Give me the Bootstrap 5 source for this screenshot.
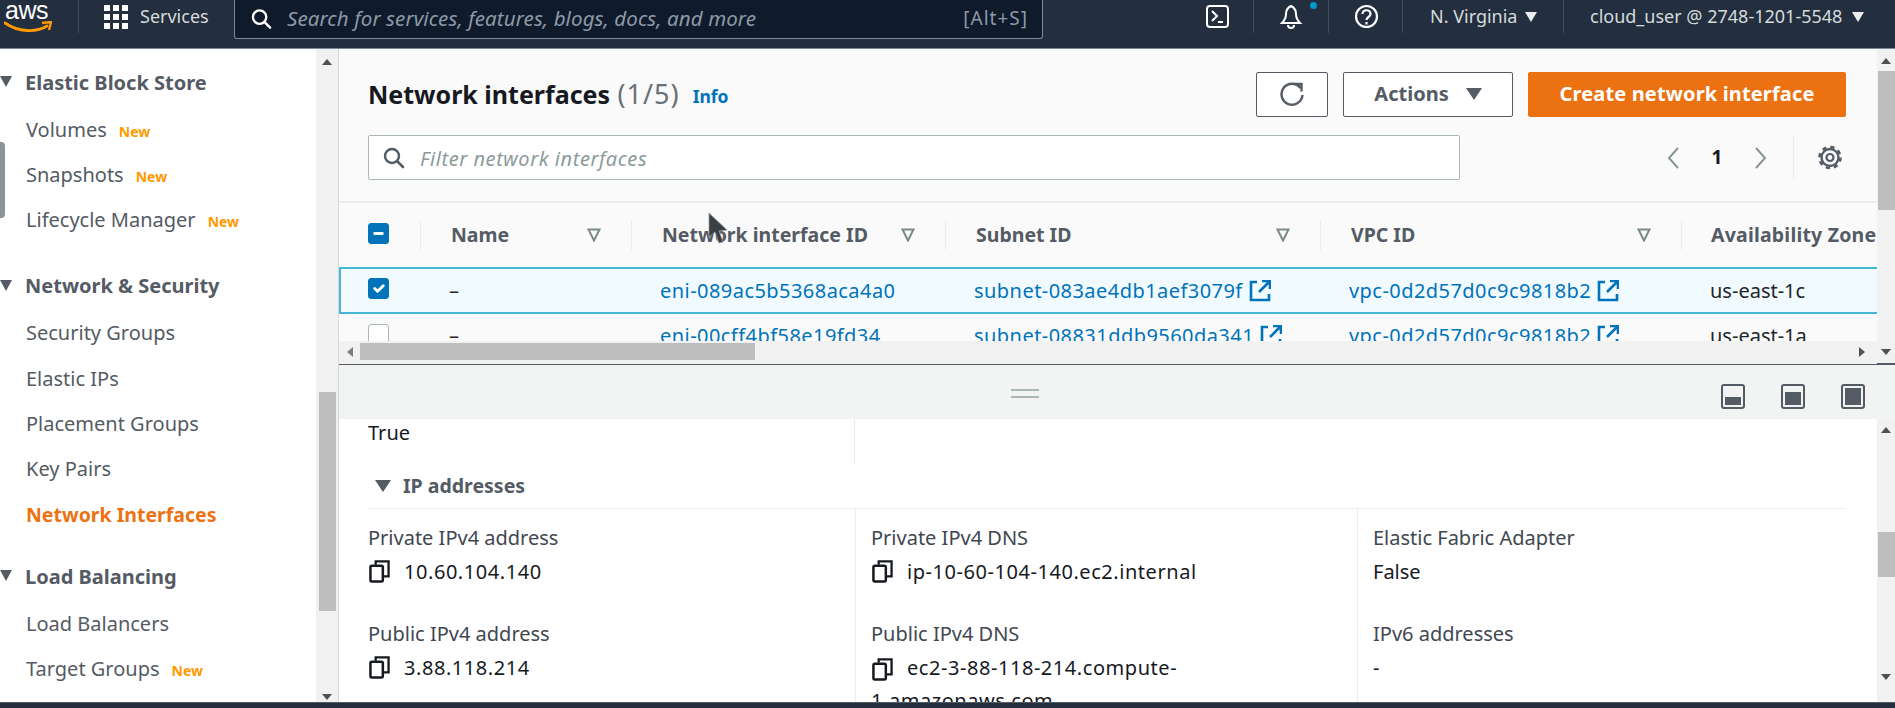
<!DOCTYPE html>
<html lang="en">
<head>
    <meta charset="UTF-8">
    <meta name="viewport" content="width=device-width, initial-scale=1.0">
    <title>Network interfaces | EC2 Management Console</title>
    <link href="https://cdn.jsdelivr.net/npm/bootstrap@5.3.0/dist/css/bootstrap.min.css" rel="stylesheet">
    <style>
        html, body { height: 100%; }
        body { font-family: "Noto Sans", "Open Sans", sans-serif; font-size: 20px; color: #16191f; background: #fff; overflow: hidden; }
        a { text-decoration: none; }
        .page-shell { height: 708px; }

        /* top bar */
        .topbar { height: 49px; flex: none; background: #232f3e; border-bottom: 1px solid #7d8998; color: #d5dbdb; font-size: 18px; }
        .hd-seg { height: 33px; flex: none; border-right: 1px solid #414d5c; }
        .hd-logo { width: 79px; padding-left: 4px; }
        .aws-word { display: block; color: #fff; font-family: "Liberation Sans", sans-serif; font-size: 25px; line-height: 21px; letter-spacing: -0.5px; padding-left: 1px; }
        .aws-smile { display: block; width: 48px; height: 12px; }
        .hd-services { width: 155px; border: 0; padding-left: 25px; gap: 12px; }
        .hd-search { width: 809px; height: 39px; flex: none; background: #0f1b2a; border: 1px solid #7d8998; border-top: 0; border-radius: 0 0 3px 3px; padding: 0 14px 1px 16px; gap: 15px; }
        .hd-search span.ph { color: #8d99a8; font-style: italic; font-size: 20.5px; letter-spacing: .1px; white-space: nowrap; }
        .hd-search span.kbd-hint { color: #8d99a8; font-size: 19px; letter-spacing: 1px; margin-left: auto; }
        .hd-term { width: 211px; padding-right: 24px; }
        .hd-bell { width: 75px; }
        .hd-help { width: 74px; padding-left: 2px; }
        .hd-region { width: 161px; padding-left: 27px; gap: 8px; }
        .hd-user { width: 331px; border: 0; padding-left: 26px; gap: 10px; white-space: nowrap; }
        .caret-w { width: 0; height: 0; border-left: 6px solid transparent; border-right: 6px solid transparent; border-top: 10px solid #eaeded; }
        .bell-dot { position: absolute; width: 7px; height: 7px; border-radius: 50%; background: #0099cc; top: 2px; right: 11px; }

        /* left navigation */
        .side-nav { width: 316px; flex: none; overflow: hidden; color: #545b64; padding-top: 20px; }
        .nav-head { height: 27px; font-weight: 700; padding-left: 25px; display: flex; align-items: center; position: relative; margin-top: 39.5px; margin-bottom: 20px; white-space: nowrap; }
        .nav-head:first-child { margin-top: 0; }
        .nav-head.tight { margin-top: 35.5px; }
        .tri-down { position: absolute; left: 0; top: 7px; width: 0; height: 0; border-left: 6px solid transparent; border-right: 6px solid transparent; border-top: 11px solid #545b64; }
        .nav-item-row { height: 27px; margin-bottom: 18.2px; padding-left: 26px; display: flex; align-items: center; gap: 12px; white-space: nowrap; }
        .nav-item-row.current { color: #ec7211; font-weight: 700; font-size: 19.5px; }
        .new-tag { color: #ff9900; font-weight: 700; font-size: 14px; padding-top: 3px; }
        .nav-handle { position: absolute; left: -4px; top: 93px; width: 9px; height: 76px; background: #8e9399; border-radius: 4px; }

        /* fake browser scrollbars */
        .sb-track { flex: none; background: #f1f1f1; display: flex; flex-direction: column; align-items: center; }
        .sb-left { width: 23px; border-right: 1px solid #d5dbdb; }
        .sb-thumb { background: #bdbdbd; flex: none; }
        .sb-up, .sb-down { flex: none; width: 0; height: 0; border-left: 5px solid transparent; border-right: 5px solid transparent; }
        .sb-up { border-bottom: 6px solid #505050; }
        .sb-down { border-top: 6px solid #505050; }
        .sb-right { width: 18px; }
        .side-up { margin-top: 10px; }
        .side-thumb { width: 17px; height: 219px; margin-top: 327px; }
        .side-down { margin-top: 83px; }
        .upper-up { margin-top: 9px; }
        .upper-thumb { width: 17px; height: 139px; margin-top: 7px; }
        .upper-down { margin-top: 139px; }
        .lower-up { margin-top: 8px; }
        .lower-thumb { width: 17px; height: 45px; margin-top: 99px; }
        .lower-down { margin-top: 97px; }

        /* upper panel */
        .work-area { min-width: 0; }
        .upper-panel { height: 316px; flex: none; background: #fafafa; border-bottom: 2px solid #545b64; }
        .upper-main { min-width: 0; }
        .tools-wrap { padding: 22px 31px 0 29px; height: 154px; flex: none; border-bottom: 2px solid #eaeded; }
        .page-title { font-size: 25px; font-weight: 700; margin: 0; line-height: 45px; white-space: nowrap; }
        .page-title span { font-weight: 400; font-size: 27px; color: #687078; letter-spacing: 1px; margin-left: 1px; }
        .info-link { color: #0073bb; font-weight: 700; font-size: 17.5px; margin-left: 13px; padding-top: 5px; }
        .aws-btn { height: 45px; border-radius: 2px; font-weight: 700; font-size: 20px; display: flex; align-items: center; justify-content: center; padding: 0; }
        .aws-btn.outline { background: #fff; border: 1px solid #545b64; color: #545b64; }
        .btn-refresh { width: 72px; margin-right: 15px; }
        .btn-actions { width: 170px; gap: 17px; margin-right: 15px; }
        .btn-create { width: 318px; background: #ec7211; color: #fff; border: 1px solid #ec7211; letter-spacing: .15px; }
        .tri-dark { width: 0; height: 0; border-left: 8px solid transparent; border-right: 8px solid transparent; border-top: 12px solid #545b64; }
        .filter-row { margin-top: 18px; }
        .filter-box { width: 1092px; height: 45px; background: #fff; border: 1px solid #aab7b8; border-radius: 2px; padding-left: 14px; gap: 15px; }
        .filter-box input { border: 0; background: none; outline: 0; flex: 1; font-size: 20px; font-style: italic; letter-spacing: .55px; padding: 2px 0 0; }
        .filter-box input::placeholder { color: #8c9a9b; }
        .pager-wrap { margin-left: auto; margin-right: 4px; }
        .pager-wrap b { width: 30px; text-align: center; font-size: 19px; margin: 0 22px; }
        .pager-sep { width: 1px; height: 45px; background: #eaeded; margin: 0 24px 0 25px; }

        .grid-clip { height: 138px; flex: none; overflow: hidden; }
        .eni-table { table-layout: fixed; width: 1538px; margin: 0; background: transparent; --bs-table-bg: transparent; }
        .eni-table th, .eni-table td { border: 0; padding: 0; vertical-align: middle; white-space: nowrap; overflow: hidden; }
        .eni-table thead th { height: 65px; color: #545b64; font-weight: 700; font-size: 19.5px; }
        .th-inner { height: 30px; display: flex; align-items: center; justify-content: space-between; border-left: 1px solid #eaeded; padding: 0 30px 0 30px; }
        .th-inner.az-head { letter-spacing: .2px; padding-left: 29px; padding-right: 0; }
        .eni-table tbody td { height: 45px; font-size: 20px; }
        .row-picked td { background: #f1faff; border-top: 2px solid #44b9d6 !important; border-bottom: 2px solid #44b9d6 !important; }
        .row-picked td:first-child { border-left: 2px solid #44b9d6 !important; }
        .cell-pad { padding-left: 29px !important; }
        .dash-cell { padding-left: 29px !important; }
        .eni-table a { color: #0073bb; letter-spacing: .45px; }
        .cb-cell { padding-left: 28px !important; }
        .row-picked .cb-cell { padding-left: 27px !important; }
        .form-check-input.aws-check { width: 21px; height: 21px; margin: 0 0 4px; border-radius: 3px; border: 1px solid #aab7b8; display: block; }
        .form-check-input.aws-check:checked, .form-check-input.aws-check:indeterminate { background-color: #0073bb; border-color: #0073bb; }
        .ext-ico { margin-left: 6px; vertical-align: -4px; }

        .hscroll { height: 23px; flex: none; background: #f1f1f1; padding: 0 12px 2px 8px; }
        .hs-left, .hs-right { width: 0; height: 0; border-top: 5px solid transparent; border-bottom: 5px solid transparent; flex: none; }
        .hs-left { border-right: 6px solid #7c7c7c; }
        .hs-right { border-left: 6px solid #505050; margin-left: auto; }
        .hs-thumb { width: 395px; height: 17px; background: #bdbdbd; margin-left: 7px; flex: none; }

        /* split handle */
        .drag-bar { height: 54px; flex: none; background: #f2f3f3; padding: 8px 30px 0 0; position: relative; }
        .grip { position: absolute; left: 672px; top: 24px; width: 28px; height: 9px; border-top: 2px solid #aab7b8; border-bottom: 2px solid #aab7b8; }
        .split-icons { gap: 36px; margin-left: auto; }

        /* lower panel */
        .lower-panel { min-height: 0; }
        .lower-main { min-width: 0; overflow: hidden; padding: 0 33px 0 29px; }
        .true-cell { width: 487px; height: 45px; flex: none; border-right: 1px solid #eaeded; line-height: 28px; }
        .section-head { height: 44px; flex: none; font-weight: 700; color: #545b64; font-size: 19.5px; gap: 12px; padding-left: 7px; border-bottom: 1px solid #eaeded; box-sizing: content-box; }
        .tri-sm { width: 0; height: 0; border-left: 8px solid transparent; border-right: 8px solid transparent; border-top: 12px solid #545b64; }
        .ip-grid { display: grid; grid-template-columns: 487px 502px 1fr; flex: 1; min-height: 0; overflow: hidden; }
        .ip-col { padding: 15px 0 0 15px; border-left: 1px solid #eaeded; }
        .ip-col:first-child { padding-left: 0; border-left: 0; }
        .ip-label { height: 27px; line-height: 27px; color: #414750; white-space: nowrap; }
        .ip-value { height: 33px; margin-top: 4px; margin-bottom: 32px; line-height: 33px; gap: 14px; white-space: nowrap; }
        .ip-value.num-val { letter-spacing: .55px; }
        .ip-value.wrap-val { display: block; white-space: normal; margin-bottom: 0; height: auto; }
        .ip-value svg { flex: none; margin-left: 1px; }
        .wrap-val svg { margin-right: 14px; vertical-align: text-bottom; }
        .footer-strip { height: 6px; flex: none; background: #232f3e; border-top: 1px solid #545b64; }

        .mouse-cursor { position: absolute; left: 708px; top: 212px; z-index: 5; }
    </style>
</head>
<body>
    <svg width="0" height="0" class="position-absolute">
        <symbol id="ico-search" viewBox="0 0 22 22"><circle cx="9" cy="9" r="7" fill="none" stroke="currentColor" stroke-width="2.4"/><path d="M14 14l6 6" stroke="currentColor" stroke-width="2.6" stroke-linecap="round"/></symbol>
        <symbol id="ico-ext" viewBox="0 0 22 22"><path d="M8 2H2v18h18v-6" fill="none" stroke="currentColor" stroke-width="2.6"/><path d="M13 1h8v8M20 2L10 12" fill="none" stroke="currentColor" stroke-width="2.6"/></symbol>
        <symbol id="ico-copy" viewBox="0 0 22 24"><path d="M7 5V1.5h13.500V17H15" fill="none" stroke="currentColor" stroke-width="2.400"/><rect x="1.500" y="6" width="13" height="16.500" rx="1.500" fill="none" stroke="currentColor" stroke-width="2.600"/></symbol>
        <symbol id="ico-sort" viewBox="0 0 14 14"><path d="M1.500 1.500h11L7 12.500z" fill="none" stroke="#7c8a8b" stroke-width="2"/></symbol>
    </svg>

    <svg class="mouse-cursor" width="22" height="33" viewBox="0 0 22 33"><path d="M1 1v24l6-5 4 11 4-1-4-11 8-1z" fill="#3a3f44" stroke="#9a9a9a" stroke-width=".8"/></svg>

    <div class="page-shell d-flex flex-column">
        <header class="topbar d-flex align-items-start">
            <div class="hd-seg hd-logo">
                <span class="aws-word">aws</span>
                <svg class="aws-smile" viewBox="0 0 48 12"><path d="M1 2c13 9 31 10 42 3" fill="none" stroke="#f90" stroke-width="2.800" stroke-linecap="round"/><path d="M38 2l9-1-2 8" fill="none" stroke="#f90" stroke-width="2.400"/></svg>
            </div>
            <div class="hd-seg hd-services d-flex align-items-center">
                <svg width="24" height="24" viewBox="0 0 24 24" fill="#fff"><rect width="6" height="6"/><rect x="9" width="6" height="6"/><rect x="18" width="6" height="6"/><rect y="9" width="6" height="6"/><rect x="9" y="9" width="6" height="6"/><rect x="18" y="9" width="6" height="6"/><rect y="18" width="6" height="6"/><rect x="9" y="18" width="6" height="6"/><rect x="18" y="18" width="6" height="6"/></svg>
                <span>Services</span>
            </div>
            <div class="hd-search d-flex align-items-center">
                <svg width="21" height="22" class="text-white flex-none"><use href="#ico-search"/></svg>
                <span class="ph">Search for services, features, blogs, docs, and more</span>
                <span class="kbd-hint">[Alt+S]</span>
            </div>
            <div class="hd-seg hd-term d-flex align-items-center justify-content-end">
                <svg width="23" height="23" viewBox="0 0 23 23" fill="none" stroke="#fff" stroke-width="2"><rect x="1" y="1" width="21" height="21" rx="3"/><path d="M6 6l5 5-5 5M12 17h5"/></svg>
            </div>
            <div class="hd-seg hd-bell d-flex align-items-center justify-content-center position-relative">
                <svg width="24" height="26" viewBox="0 0 24 26" fill="none" stroke="#fff" stroke-width="2"><path d="M12 2c-4 2-5 5-5 8 0 4-2 7-4 9h18c-2-2-4-5-4-9 0-3-1-6-5-8z"/><path d="M9 21c0 4 6 4 6 0" /></svg>
                <span class="bell-dot"></span>
            </div>
            <div class="hd-seg hd-help d-flex align-items-center justify-content-center">
                <svg width="25" height="25" viewBox="0 0 25 25" fill="none" stroke="#fff" stroke-width="2.200"><circle cx="12.500" cy="12.500" r="10.500"/><path d="M8.500 10c0-5 8-5 8 0 0 3-4 3-4 6"/><path d="M12.500 18v2.500"/></svg>
            </div>
            <div class="hd-seg hd-region d-flex align-items-center">
                <span>N. Virginia</span><span class="caret-w"></span>
            </div>
            <div class="hd-seg hd-user d-flex align-items-center">
                <span>cloud_user @ 2748-1201-5548</span><span class="caret-w"></span>
            </div>
        </header>

        <div class="d-flex flex-grow-1 position-relative" style="min-height:0">
            <aside class="side-nav">
                <div class="nav-head"><span class="tri-down"></span>Elastic Block Store</div>
                <div class="nav-item-row">Volumes <span class="new-tag">New</span></div>
                <div class="nav-item-row">Snapshots <span class="new-tag">New</span></div>
                <div class="nav-item-row">Lifecycle Manager <span class="new-tag">New</span></div>
                <div class="nav-head"><span class="tri-down"></span>Network &amp; Security</div>
                <div class="nav-item-row">Security Groups</div>
                <div class="nav-item-row">Elastic IPs</div>
                <div class="nav-item-row">Placement Groups</div>
                <div class="nav-item-row">Key Pairs</div>
                <div class="nav-item-row current">Network Interfaces</div>
                <div class="nav-head tight"><span class="tri-down"></span>Load Balancing</div>
                <div class="nav-item-row">Load Balancers</div>
                <div class="nav-item-row">Target Groups <span class="new-tag">New</span></div>
            </aside>
            <div class="sb-track sb-left">
                <span class="sb-up side-up"></span>
                <span class="sb-thumb side-thumb"></span>
                <span class="sb-down side-down"></span>
            </div>

            <div class="work-area d-flex flex-column flex-grow-1">
                <section class="upper-panel d-flex">
                    <div class="upper-main d-flex flex-column flex-grow-1">
                        <div class="tools-wrap">
                            <div class="d-flex align-items-center">
                                <h1 class="page-title">Network interfaces <span>(1/5)</span></h1>
                                <a href="#" class="info-link">Info</a>
                                <div class="d-flex ms-auto">
                                    <button type="button" class="aws-btn outline btn-refresh" aria-label="Refresh">
                                        <svg width="25" height="25" viewBox="0 0 25 25" fill="none" stroke="#545b64" stroke-width="2.400"><path d="M20.500 6A10.500 10.500 0 1 0 22.500 13"/><path d="M14 2h7.500v7.500"/></svg>
                                    </button>
                                    <button type="button" class="aws-btn outline btn-actions">Actions <span class="tri-dark"></span></button>
                                    <button type="button" class="aws-btn btn-create">Create network interface</button>
                                </div>
                            </div>
                            <div class="d-flex align-items-center filter-row">
                                <div class="filter-box d-flex align-items-center">
                                    <svg width="22" height="22" style="color:#545b64"><use href="#ico-search"/></svg>
                                    <input type="text" placeholder="Filter network interfaces">
                                </div>
                                <div class="pager-wrap d-flex align-items-center">
                                    <svg width="14" height="24" viewBox="0 0 14 24" fill="none" stroke="#879596" stroke-width="2"><path d="M12 2L3 12l9 10"/></svg>
                                    <b>1</b>
                                    <svg width="14" height="24" viewBox="0 0 14 24" fill="none" stroke="#879596" stroke-width="2"><path d="M2 2l9 10-9 10"/></svg>
                                    <span class="pager-sep"></span>
                                    <svg width="24" height="25" viewBox="0 0 24 25" fill="none" stroke="#545b64"><circle cx="12" cy="12.500" r="8.500" stroke-width="2.400"/><circle cx="12" cy="12.500" r="10.500" stroke-width="2.600" stroke-dasharray="4.200 4.050"/><circle cx="12" cy="12.500" r="3.500" stroke-width="2.200"/></svg>
                                </div>
                            </div>
                        </div>

                        <div class="grid-clip">
                            <table class="table eni-table">
                                <colgroup>
                                    <col style="width:80px"><col style="width:211px"><col style="width:314px"><col style="width:375px"><col style="width:361px"><col style="width:197px">
                                </colgroup>
                                <thead>
                                    <tr>
                                        <th class="cb-cell"><input class="form-check-input aws-check" type="checkbox" id="checkAll" aria-label="Select all"></th>
                                        <th><div class="th-inner">Name <svg width="14" height="14"><use href="#ico-sort"/></svg></div></th>
                                        <th><div class="th-inner">Network interface ID <svg width="14" height="14"><use href="#ico-sort"/></svg></div></th>
                                        <th><div class="th-inner">Subnet ID <svg width="14" height="14"><use href="#ico-sort"/></svg></div></th>
                                        <th><div class="th-inner">VPC ID <svg width="14" height="14"><use href="#ico-sort"/></svg></div></th>
                                        <th><div class="th-inner az-head">Availability Zone</div></th>
                                    </tr>
                                </thead>
                                <tbody>
                                    <tr class="row-picked">
                                        <td class="cb-cell"><input class="form-check-input aws-check" type="checkbox" checked aria-label="Select row"></td>
                                        <td class="dash-cell">–</td>
                                        <td class="cell-pad"><a href="#">eni-089ac5b5368aca4a0</a></td>
                                        <td class="cell-pad"><a href="#">subnet-083ae4db1aef3079f<svg class="ext-ico" width="22" height="22"><use href="#ico-ext"/></svg></a></td>
                                        <td class="cell-pad"><a href="#">vpc-0d2d57d0c9c9818b2<svg class="ext-ico" width="22" height="22"><use href="#ico-ext"/></svg></a></td>
                                        <td class="cell-pad">us-east-1c</td>
                                    </tr>
                                    <tr>
                                        <td class="cb-cell"><input class="form-check-input aws-check" type="checkbox" aria-label="Select row"></td>
                                        <td class="dash-cell">–</td>
                                        <td class="cell-pad"><a href="#">eni-00cff4bf58e19fd34</a></td>
                                        <td class="cell-pad"><a href="#">subnet-08831ddb9560da341<svg class="ext-ico" width="22" height="22"><use href="#ico-ext"/></svg></a></td>
                                        <td class="cell-pad"><a href="#">vpc-0d2d57d0c9c9818b2<svg class="ext-ico" width="22" height="22"><use href="#ico-ext"/></svg></a></td>
                                        <td class="cell-pad">us-east-1a</td>
                                    </tr>
                                </tbody>
                            </table>
                        </div>

                        <div class="hscroll d-flex align-items-center">
                            <span class="hs-left"></span>
                            <span class="hs-thumb"></span>
                            <span class="hs-right"></span>
                        </div>
                    </div>
                    <div class="sb-track sb-right">
                        <span class="sb-up upper-up"></span>
                        <span class="sb-thumb upper-thumb"></span>
                        <span class="sb-down upper-down"></span>
                    </div>
                </section>

                <div class="drag-bar d-flex align-items-center">
                    <span class="grip"></span>
                    <div class="split-icons d-flex">
                        <svg width="24" height="25" viewBox="0 0 24 25"><rect x="1" y="1" width="22" height="23" rx="2" fill="none" stroke="#545b64" stroke-width="2"/><rect x="4" y="13" width="16" height="8" fill="#545b64"/></svg>
                        <svg width="24" height="25" viewBox="0 0 24 25"><rect x="1" y="1" width="22" height="23" rx="2" fill="none" stroke="#545b64" stroke-width="2"/><rect x="4" y="8" width="16" height="13" fill="#545b64"/></svg>
                        <svg width="24" height="25" viewBox="0 0 24 25"><rect x="1" y="1" width="22" height="23" rx="2" fill="none" stroke="#545b64" stroke-width="2"/><rect x="4" y="4" width="16" height="17" fill="#545b64"/></svg>
                    </div>
                </div>

                <section class="lower-panel d-flex flex-grow-1">
                    <div class="lower-main d-flex flex-column flex-grow-1">
                        <div class="true-cell">True</div>
                        <div class="section-head d-flex align-items-center"><span class="tri-sm"></span>IP addresses</div>
                        <div class="ip-grid">
                            <div class="ip-col">
                                <div class="ip-label">Private IPv4 address</div>
                                <div class="ip-value num-val d-flex align-items-center"><svg width="21" height="23"><use href="#ico-copy"/></svg>10.60.104.140</div>
                                <div class="ip-label">Public IPv4 address</div>
                                <div class="ip-value num-val d-flex align-items-center"><svg width="21" height="23"><use href="#ico-copy"/></svg>3.88.118.214</div>
                            </div>
                            <div class="ip-col">
                                <div class="ip-label">Private IPv4 DNS</div>
                                <div class="ip-value num-val d-flex align-items-center"><svg width="21" height="23"><use href="#ico-copy"/></svg>ip-10-60-104-140.ec2.internal</div>
                                <div class="ip-label">Public IPv4 DNS</div>
                                <div class="ip-value num-val wrap-val"><svg width="21" height="23"><use href="#ico-copy"/></svg>ec2-3-88-118-214.compute-<br>1.amazonaws.com</div>
                            </div>
                            <div class="ip-col">
                                <div class="ip-label">Elastic Fabric Adapter</div>
                                <div class="ip-value">False</div>
                                <div class="ip-label">IPv6 addresses</div>
                                <div class="ip-value">-</div>
                            </div>
                        </div>
                    </div>
                    <div class="sb-track sb-right">
                        <span class="sb-up lower-up"></span>
                        <span class="sb-thumb lower-thumb"></span>
                        <span class="sb-down lower-down"></span>
                    </div>
                </section>
            </div>
            <span class="nav-handle"></span>
        </div>

        <div class="footer-strip"></div>
    </div>

    <script>
        document.getElementById('checkAll').indeterminate = true;
    </script>
    <script src="https://cdn.jsdelivr.net/npm/bootstrap@5.3.0/dist/js/bootstrap.bundle.min.js"></script>
</body>
</html>
